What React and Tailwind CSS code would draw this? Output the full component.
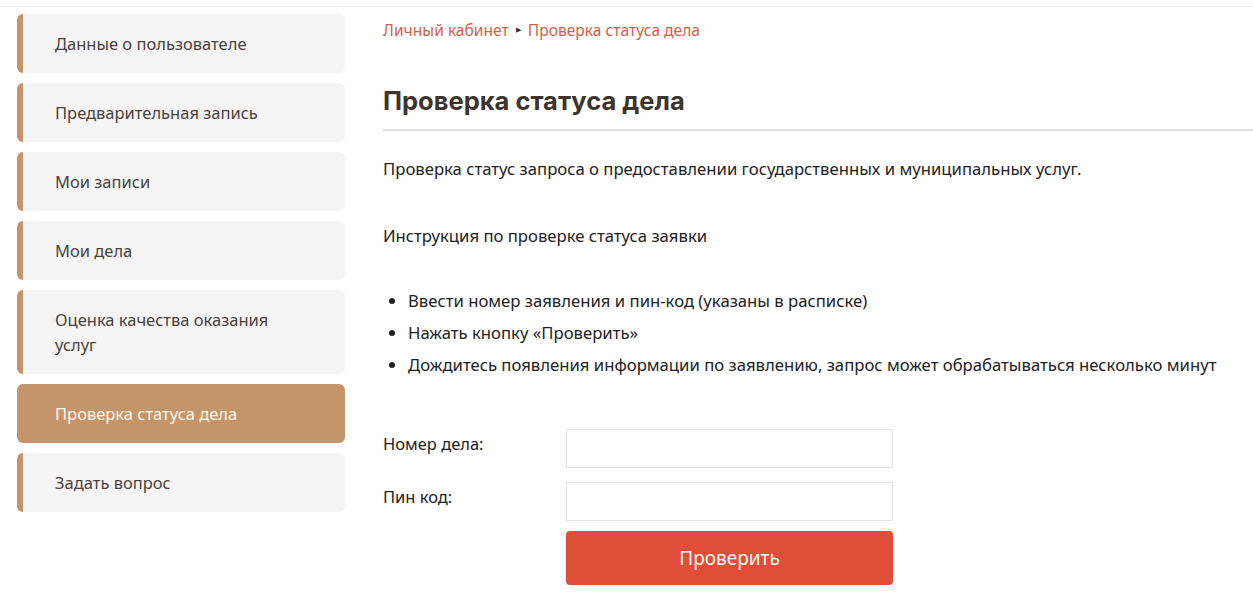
import { useState } from "react";

const MENU = [
  "Данные о пользователе",
  "Предварительная запись",
  "Мои записи",
  "Мои дела",
  "Оценка качества оказания услуг",
  "Проверка статуса дела",
  "Задать вопрос",
];

const STEPS = [
  "Ввести номер заявления и пин-код (указаны в расписке)",
  "Нажать кнопку «Проверить»",
  "Дождитесь появления информации по заявлению, запрос может обрабатываться несколько минут",
];

export default function App() {
  const [active] = useState("Проверка статуса дела");
  const [caseNo, setCaseNo] = useState("");
  const [pin, setPin] = useState("");

  return (
    <div className="min-h-[606px] bg-white font-['Noto_Sans',sans-serif]">
      <div className="h-[7px] border-b border-[#f3f3f3]" />

      <div className="flex pl-[17px]">
        {/* Sidebar */}
        <aside className="w-[328px] shrink-0 pt-[7px] flex flex-col gap-[10px]">
          {MENU.map((item) => (
            <a
              key={item}
              href="#"
              className={`block rounded-md border-l-[6px] border-[#c4956a] pl-[32px] pr-[40px] py-[17px] text-[16.5px] leading-[25px] ${
                item === active
                  ? "bg-[#c4956a] text-[#fdf6ea]"
                  : "bg-[#f5f5f5] text-[#4a423c]"
              }`}
            >
              {item}
            </a>
          ))}
        </aside>

        {/* Content */}
        <main className="flex-1 ml-[38px] text-[#222]">
          <nav className="flex items-center gap-[6px] pt-[11px] text-[15.6px] leading-[24px] text-[#d35f4a]">
            <a href="#">Личный кабинет</a>
            <span className="text-[#333] text-[7px] mx-[1px]">▶</span>
            <span>Проверка статуса дела</span>
          </nav>

          <h1 className="mt-[42px] pb-[12px] border-b-2 border-[#dedede] font-['Inter',sans-serif] text-[25.5px] leading-[33px] font-bold text-[#3d342c]">
            Проверка статуса дела
          </h1>

          <p className="mt-[26px] text-[16.7px] leading-[24px]">
            Проверка статус запроса о предоставлении государственных и муниципальных услуг.
          </p>

          <p className="mt-[43px] text-[16.7px] leading-[24px]">
            Инструкция по проверке статуса заявки
          </p>

          <ul className="mt-[41px] flex flex-col gap-[8px] list-disc pl-[25px] text-[16.7px] leading-[24px]">
            {STEPS.map((s) => (
              <li key={s}>{s}</li>
            ))}
          </ul>

          <form className="mt-[52px] flex flex-col gap-[14px] text-[16.5px]" onSubmit={(e) => e.preventDefault()}>
            <label className="flex items-center">
              <span className="w-[183px] -mt-[8px]">Номер дела:</span>
              <input
                value={caseNo}
                onChange={(e) => setCaseNo(e.target.value)}
                className="w-[327px] h-[39px] border border-[#e5e5e5] px-3 outline-none"
              />
            </label>
            <label className="flex items-center">
              <span className="w-[183px] -mt-[8px]">Пин код:</span>
              <input
                value={pin}
                onChange={(e) => setPin(e.target.value)}
                className="w-[327px] h-[39px] border border-[#e5e5e5] px-3 outline-none"
              />
            </label>
            <button
              type="submit"
              className="-mt-[4px] ml-[183px] w-[327px] h-[54px] rounded bg-[#e04e39] text-[#fff8ee] text-[19px]"
            >
              Проверить
            </button>
          </form>
        </main>
      </div>
    </div>
  );
}
